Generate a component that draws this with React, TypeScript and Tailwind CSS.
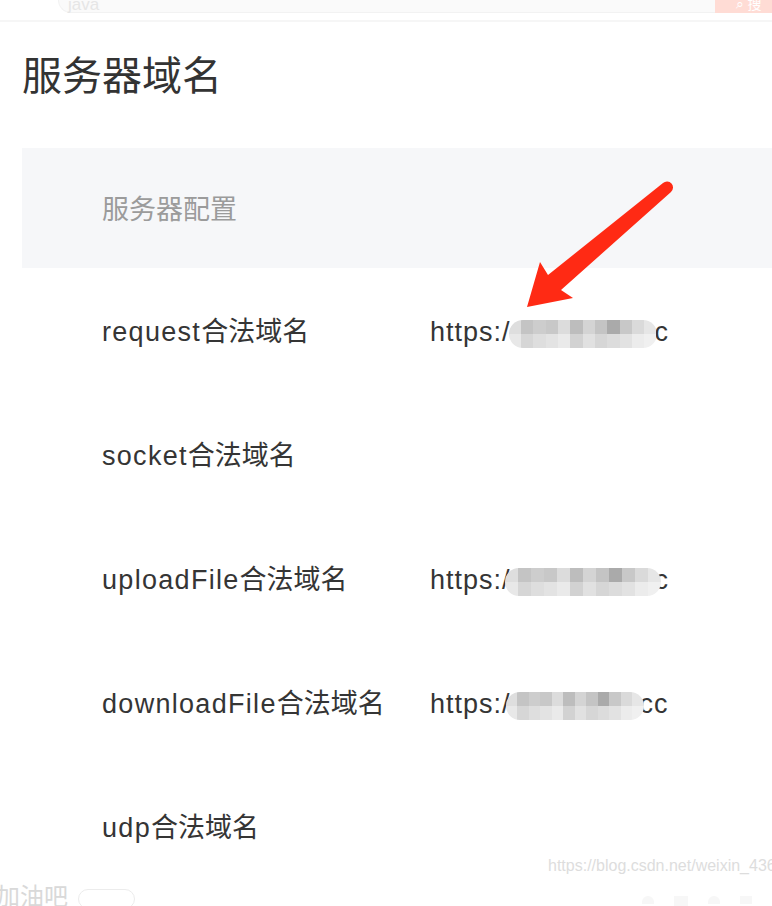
import React from "react";

const FONT = "font-['Liberation_Sans','Noto_Sans_CJK_SC',sans-serif]";

const pixelsA = ["#dedede", "#c4c4c4", "#cdcdcd", "#c8c8c8", "#dcdcdc", "#bdbdbd", "#d4d4d4", "#c4c4c4", "#aaaaaa", "#c8c8c8", "#dadada", "#e6e6e6"];
const pixelsB = ["#e8e8e8", "#d6d6d6", "#dedede", "#e3e3e3", "#eaeaea", "#d2d2d2", "#e1e1e1", "#d6d6d6", "#dcdcdc", "#e2e2e2", "#ececec", "#f0f0f0"];

function Blur({ width }: { width: number }) {
  return (
    <span
      className="inline-flex flex-col overflow-hidden rounded-full align-middle blur-[0.3px]"
      style={{ width }}
    >
      <span className="flex h-[14px]">
        {pixelsA.map((c, i) => (
          <span key={i} className="flex-1" style={{ background: c }} />
        ))}
      </span>
      <span className="flex h-[14px]">
        {pixelsB.map((c, i) => (
          <span key={i} className="flex-1" style={{ background: c }} />
        ))}
      </span>
    </span>
  );
}

function Value({ blurW, tail, shift, tailShift }: { blurW: number; tail: string; shift: number; tailShift: number }) {
  return (
    <span className="flex items-center tracking-[1px]">
      <span>https:/</span>
      <span className="relative z-10" style={{ marginLeft: shift }}>
        <Blur width={blurW} />
      </span>
      <span style={{ marginLeft: tailShift }}>{tail}</span>
    </span>
  );
}

const rows: { latin: string; value?: React.ReactNode }[] = [
  { latin: "request", value: <Value blurW={148} tail="c" shift={-2} tailShift={-2} /> },
  { latin: "socket" },
  { latin: "uploadFile", value: <Value blurW={156} tail="c" shift={-6} tailShift={-6} /> },
  { latin: "downloadFile", value: <Value blurW={138} tail="cc" shift={-5} tailShift={-4} /> },
  { latin: "udp" },
];

export default function App() {
  return (
    <div className={`relative w-[772px] h-[906px] overflow-hidden bg-white ${FONT}`}>
      {/* faded search bar at top */}
      <div className="flex h-[13px]">
        <div className="ml-[58px] flex-1 rounded-bl-[13px] border-b border-l border-[#f2f2f2] bg-[#fafafa] pl-[9px] text-[17px] leading-[10px] text-[#e6e6e6]">
          java
        </div>
        <div className="flex w-[57px] items-start justify-center bg-[#ffdcd5] pl-[10px] text-[14px] leading-[8px] text-white">
          ⌕ 搜
        </div>
      </div>
      <div className="mt-[7px] h-[2px] bg-[#f6f6f6]" />

      {/* title */}
      <div className="mt-[34px] pl-[22px] text-[40px] leading-[40px] text-[#333333]">服务器域名</div>

      {/* header band */}
      <div className="ml-[22px] mt-[52px] flex h-[120px] items-center bg-[#f6f7f9] pl-[80px] pt-[4px] text-[27px] text-[#9b9b9b]">
        服务器配置
      </div>

      {/* rows */}
      <div className="ml-[22px] mt-[2px] flex flex-col pl-[80px] text-[27px] text-[#353535]">
        {rows.map((r) => (
          <div key={r.latin} className="grid h-[124px] grid-cols-[328px_1fr] items-center">
            <span>
              <span className="tracking-[1.3px]">{r.latin}</span>合法域名
            </span>
            <span>{r.value}</span>
          </div>
        ))}
      </div>

      {/* bottom faint strip */}
      <div className="flex h-[16px] items-start">
        <span className="-mt-[5px] -ml-[4px] text-[24px] leading-[24px] text-[#d9d9d9]">加油吧</span>
        <span className="ml-[10px] -mt-[1px] h-[20px] w-[57px] rounded-full border border-[#ececec]" />
        <span className="ml-auto mr-[20px] mt-[6px] flex gap-[20px]">
          <span className="h-[8px] w-[12px] rounded-t-full bg-[#f7f7f7]" />
          <span className="h-[10px] w-[14px] bg-[#f7f7f7]" />
          <span className="h-[8px] w-[12px] rounded-t-full bg-[#f7f7f7]" />
          <span className="h-[8px] w-[12px] bg-[#f7f7f7]" />
        </span>
      </div>

      {/* watermark */}
      <div className="absolute left-[548px] top-[857px] whitespace-nowrap font-['Liberation_Sans_Narrow','Liberation_Sans',sans-serif] text-[16px] leading-[18px] text-[#dddddd]">
        https://blog.csdn.net/weixin_436
      </div>

      {/* red arrow annotation */}
      <svg className="pointer-events-none absolute left-0 top-0" width="772" height="906" viewBox="0 0 772 906">
        <path
          d="M527 307 L573 298 L561 290 L671 192 A5.5 5.5 0 0 0 663 183 L548 275 L540 262 Z"
          fill="#ff2a14"
        />
      </svg>
    </div>
  );
}
